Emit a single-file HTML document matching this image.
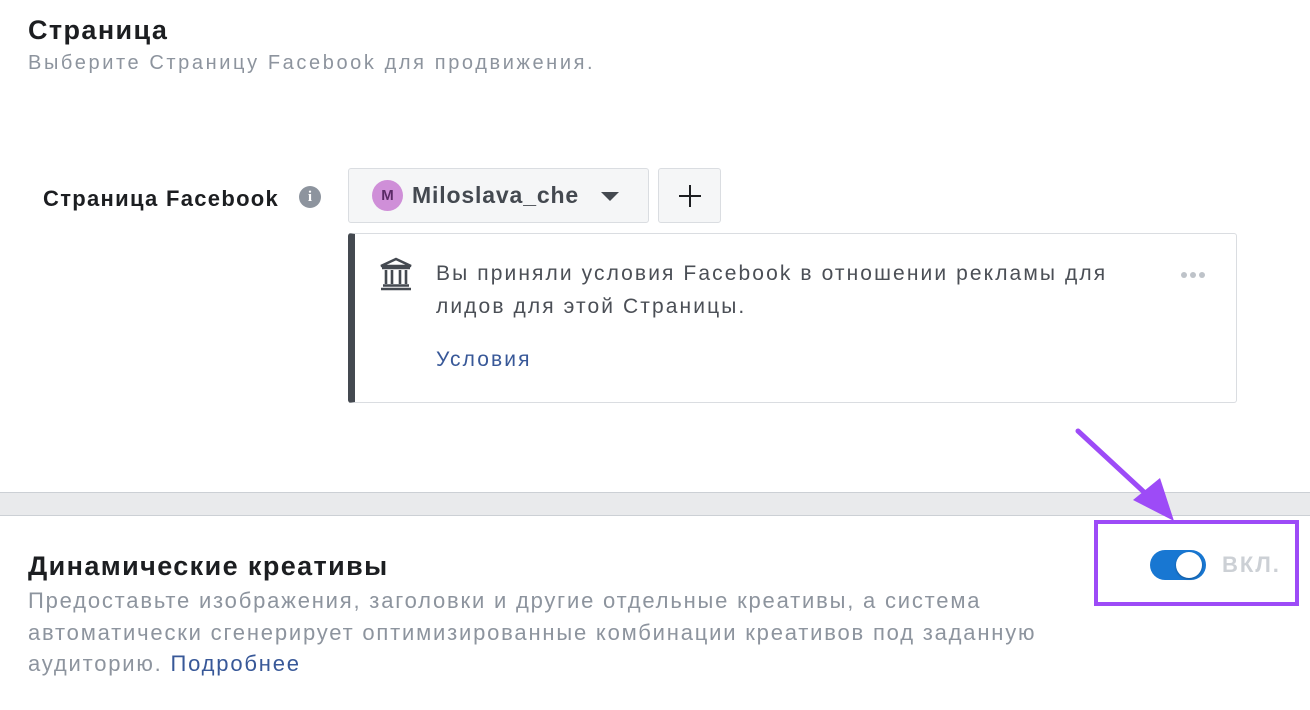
<!DOCTYPE html>
<html><head><meta charset="utf-8"><style>
body{margin:0;width:1310px;height:710px;background:#fff;position:relative;overflow:hidden;font-family:"Liberation Sans",Helvetica,Arial,sans-serif;color:#1c1e21}
.a{position:absolute;white-space:nowrap}
</style></head><body>
<div class="a" style="left:28px;top:15px;font-size:27px;letter-spacing:1.4px;font-weight:bold">Страница</div>
<div class="a" style="left:28px;top:52px;font-size:20px;letter-spacing:2.6px;color:#8d949e">Выберите Страницу Facebook для продвижения.</div>
<div class="a" style="left:43px;top:186px;font-size:22px;letter-spacing:1.3px;font-weight:bold">Страница Facebook</div>
<div class="a" style="left:299px;top:186px;width:22px;height:22px;border-radius:50%;background:#8d949e;color:#fff;font:bold 15px 'Liberation Serif',serif;text-align:center;line-height:22px">i</div>
<div class="a" style="left:348px;top:168px;width:299px;height:53px;border:1px solid #dadde1;border-radius:3px;background:#f5f6f7"></div>
<div class="a" style="left:372px;top:180px;width:31px;height:31px;border-radius:50%;background:#cf8fd8;color:#5a2a66;font-weight:bold;font-size:15px;text-align:center;line-height:31px">M</div>
<div class="a" style="left:412px;top:182px;font-size:23px;letter-spacing:0.85px;font-weight:bold;color:#444950">Miloslava_che</div>
<div class="a" style="left:601px;top:192px;width:0;height:0;border-left:9px solid transparent;border-right:9px solid transparent;border-top:9px solid #444950"></div>
<div class="a" style="left:658px;top:168px;width:61px;height:53px;border:1px solid #dadde1;border-radius:3px;background:#f5f6f7"></div>
<div class="a" style="left:679px;top:195px;width:22px;height:2px;background:#1c1e21"></div>
<div class="a" style="left:689px;top:185px;width:2px;height:22px;background:#1c1e21"></div>
<div class="a" style="left:348px;top:233px;width:881px;height:168px;border:1px solid #dadde1;border-left:7px solid #444950;border-radius:3px"></div>
<svg class="a" style="left:379px;top:257px" width="34" height="34" viewBox="0 0 34 34" fill="none" stroke="#444950" stroke-width="2.6"><path d="M2 9 L17 2 L32 9 Z M3 11 H31 M7 13 V27 M13 13 V27 M21 13 V27 M27 13 V27 M4 28.5 H30 M2 32 H32"/></svg>
<div class="a" style="left:436px;top:257px;font-size:21px;letter-spacing:2.1px;line-height:33px;color:#4b4f56">Вы приняли условия Facebook в отношении рекламы для<br>лидов для этой Страницы.</div>
<div class="a" style="left:436px;top:348px;font-size:21px;letter-spacing:2.1px;color:#385898">Условия</div>
<div class="a" style="left:1181px;top:272px;font-size:0">
<span style="display:inline-block;width:6px;height:6px;border-radius:50%;background:#bec3c9;margin-right:3px"></span><span style="display:inline-block;width:6px;height:6px;border-radius:50%;background:#bec3c9;margin-right:3px"></span><span style="display:inline-block;width:6px;height:6px;border-radius:50%;background:#bec3c9"></span></div>
<div class="a" style="left:0;top:492px;width:1310px;height:22px;background:#e9eaec;border-top:1px solid #ccd0d5;border-bottom:1px solid #ccd0d5"></div>
<div class="a" style="left:28px;top:551px;font-size:27px;letter-spacing:1.4px;font-weight:bold">Динамические креативы</div>
<div class="a" style="left:28px;top:585px;font-size:22px;letter-spacing:1.8px;line-height:31.5px;color:#8d949e">Предоставьте изображения, заголовки и другие отдельные креативы, а система<br>автоматически сгенерирует оптимизированные комбинации креативов под заданную<br>аудиторию. <span style="color:#385898">Подробнее</span></div>
<div class="a" style="left:1150px;top:550px;width:56px;height:30px;border-radius:15px;background:#1877d2"></div>
<div class="a" style="left:1176px;top:552px;width:26px;height:26px;border-radius:50%;background:#fff;box-shadow:0 1px 2px rgba(0,0,0,.3)"></div>
<div class="a" style="left:1222px;top:552px;font-size:22px;letter-spacing:2px;font-weight:bold;color:#ccd0d5">ВКЛ.</div>
<div class="a" style="left:1094px;top:520px;width:197px;height:78px;border:4px solid #9d4bf7"></div>
<svg class="a" style="left:0;top:0" width="1310" height="710"><line x1="1078" y1="431" x2="1158" y2="505" stroke="#9d4bf7" stroke-width="5" stroke-linecap="round"/><path d="M1133 500 L1174 521 L1160 478 Z" fill="#9d4bf7"/></svg>
</body></html>
